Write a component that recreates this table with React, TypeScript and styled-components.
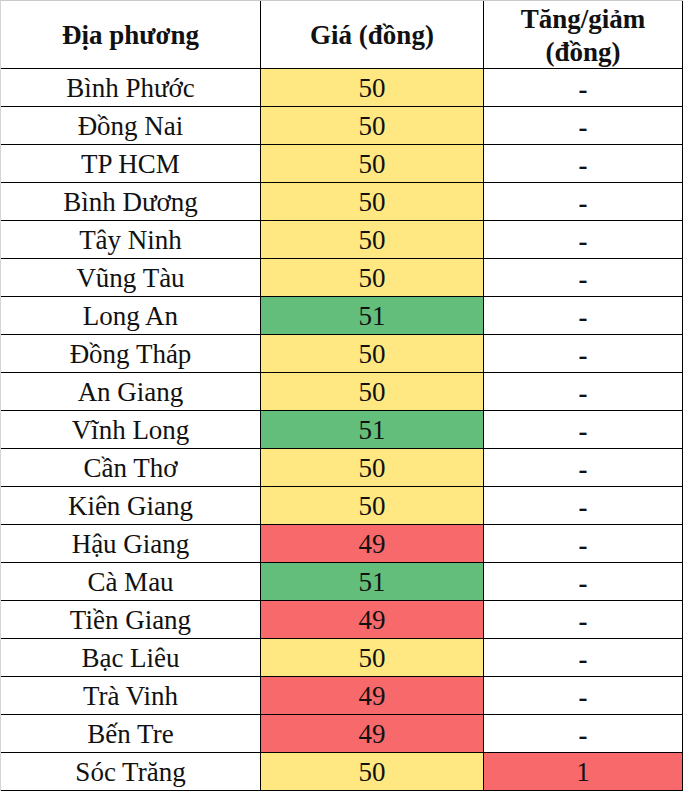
import styled, { createGlobalStyle } from "styled-components";

type Tone = "yellow" | "green" | "red" | "none";

interface PriceRow {
  place: string;
  price: number;
  change: string;
  changeTone?: Tone;
}

const rows: PriceRow[] = [
  { place: "Bình Phước", price: 50, change: "-" },
  { place: "Đồng Nai", price: 50, change: "-" },
  { place: "TP HCM", price: 50, change: "-" },
  { place: "Bình Dương", price: 50, change: "-" },
  { place: "Tây Ninh", price: 50, change: "-" },
  { place: "Vũng Tàu", price: 50, change: "-" },
  { place: "Long An", price: 51, change: "-" },
  { place: "Đồng Tháp", price: 50, change: "-" },
  { place: "An Giang", price: 50, change: "-" },
  { place: "Vĩnh Long", price: 51, change: "-" },
  { place: "Cần Thơ", price: 50, change: "-" },
  { place: "Kiên Giang", price: 50, change: "-" },
  { place: "Hậu Giang", price: 49, change: "-" },
  { place: "Cà Mau", price: 51, change: "-" },
  { place: "Tiền Giang", price: 49, change: "-" },
  { place: "Bạc Liêu", price: 50, change: "-" },
  { place: "Trà Vinh", price: 49, change: "-" },
  { place: "Bến Tre", price: 49, change: "-" },
  { place: "Sóc Trăng", price: 50, change: "1", changeTone: "red" },
];

// excel colour scale: low red, mid yellow, high green
const priceTone = (p: number): Tone => (p > 50 ? "green" : p < 50 ? "red" : "yellow");

const toneColors: Record<Tone, string> = {
  yellow: "#ffe781",
  green: "#63be7b",
  red: "#f8696b",
  none: "#ffffff",
};

export default function App() {
  return (
    <>
      <GlobalStyle />
      <Sheet>
        <HeadCell>Địa phương</HeadCell>
        <HeadCell>Giá (đồng)</HeadCell>
        <HeadCell>
          Tăng/giảm
          <br />
          (đồng)
        </HeadCell>
        {rows.map((r) => (
          <Row key={r.place}>
            <Cell>{r.place}</Cell>
            <Cell $tone={priceTone(r.price)}>{r.price}</Cell>
            <Cell $tone={r.changeTone || "none"} $dash={r.change === "-"}>
              {r.change}
            </Cell>
          </Row>
        ))}
      </Sheet>
    </>
  );
}

const GlobalStyle = createGlobalStyle`
  html, body {
    margin: 0;
    padding: 0;
    background: #ffffff;
  }
`;

const Sheet = styled.div`
  display: grid;
  grid-template-columns: 260px 223px 199px;
  width: 682px;
  border-top: 1px solid #c9c9c9;
  border-left: 1px solid #d4d4d4;
  font-family: "Liberation Serif", "Times New Roman", serif;
  color: #111111;
`;

const Row = styled.div`
  display: contents;
`;

const HeadCell = styled.div`
  height: 68px;
  box-sizing: border-box;
  display: flex;
  align-items: center;
  justify-content: center;
  text-align: center;
  border-right: 1px solid #000;
  border-bottom: 1px solid #000;
  font-weight: bold;
  font-size: 27px;
  line-height: 33px;
  padding-top: 2px;
`;

const Cell = styled.div<{ $tone?: Tone; $dash?: boolean }>`
  height: 38px;
  box-sizing: border-box;
  display: flex;
  align-items: center;
  justify-content: center;
  border-right: 1px solid #000;
  border-bottom: 1px solid #000;
  background: ${(p) => toneColors[p.$tone || "none"]};
  font-size: 27px;
  padding-top: ${(p) => (p.$dash ? "4px" : "1px")};
  font-weight: ${(p) => (p.$dash ? "bold" : "normal")};
`;
